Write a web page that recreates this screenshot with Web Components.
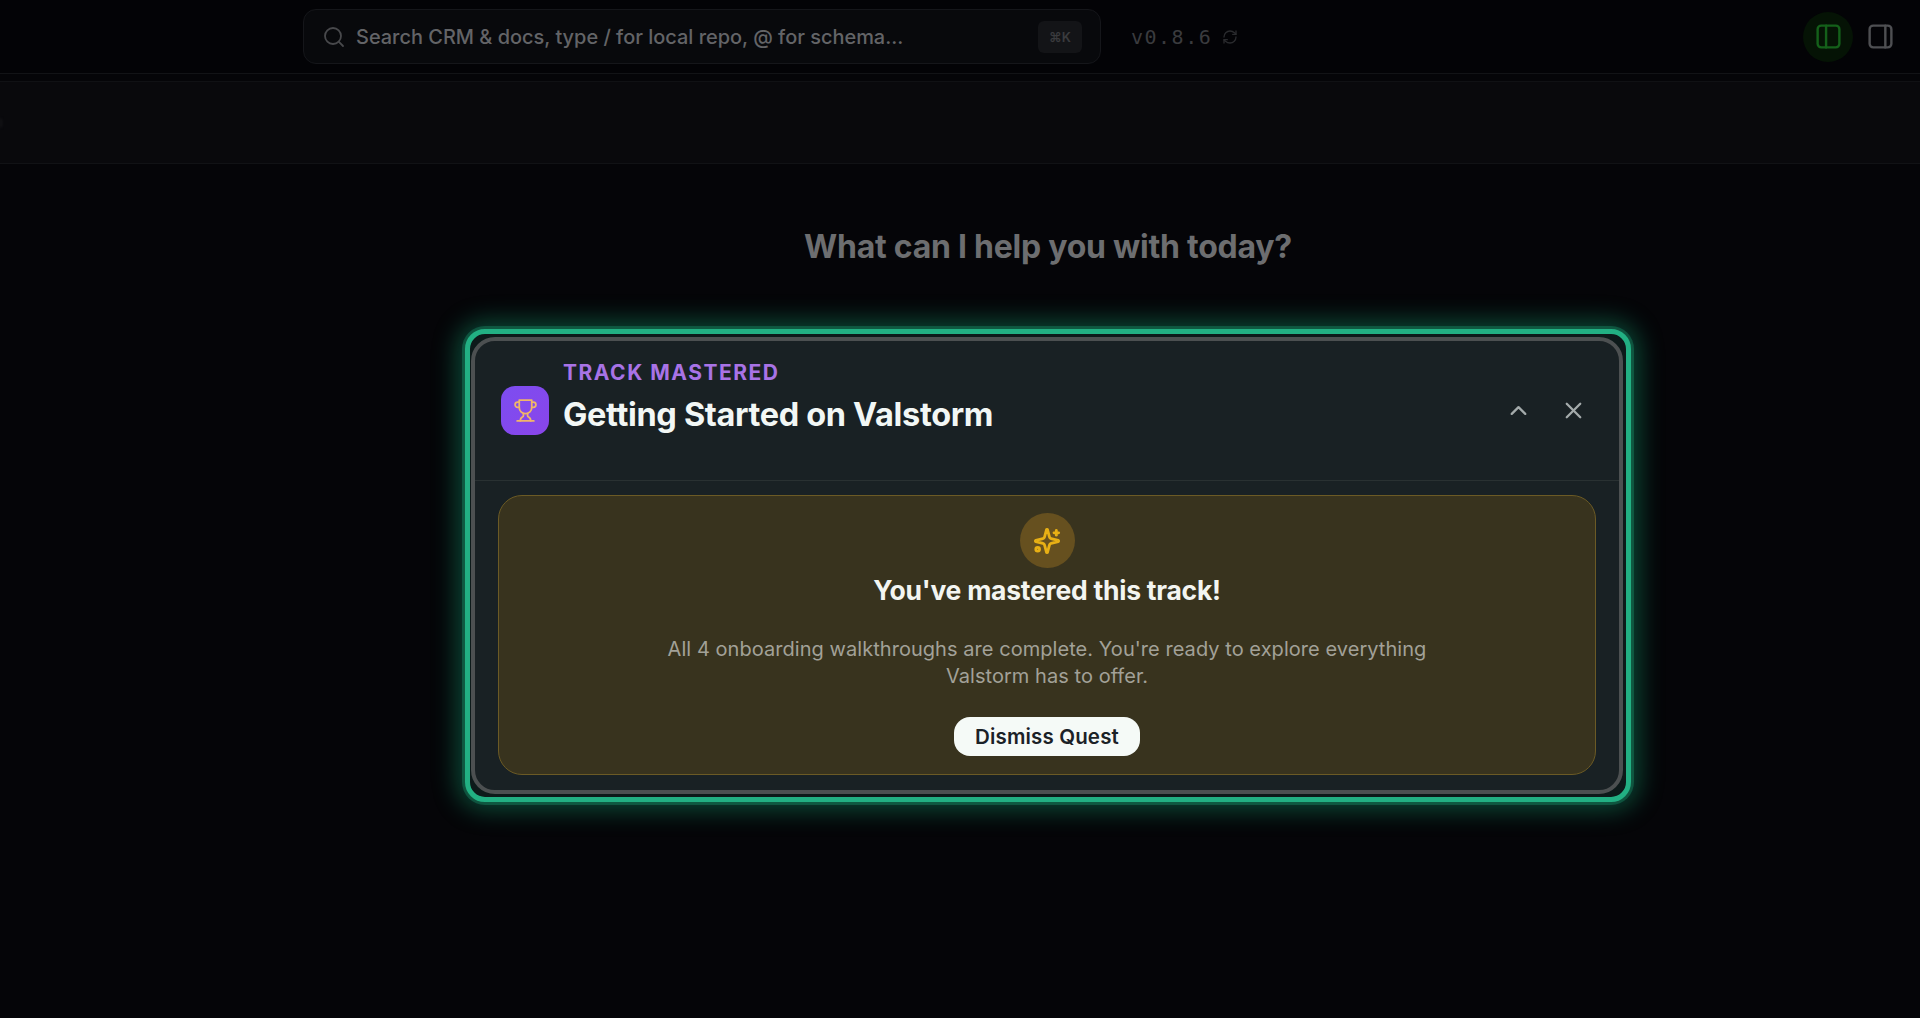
<!doctype html>
<html><head><meta charset="utf-8"><title>Valstorm</title>
<style>
html,body{margin:0;height:100%;background:#050508;overflow:hidden}
body{font-family:Inter,"Liberation Sans",sans-serif}
</style></head><body>
<app-shell>
  <top-bar></top-bar>
  <sub-bar></sub-bar>
  <help-view>
    <quest-card></quest-card>
  </help-view>
</app-shell>
<script>
const I=(d,s=24,c='currentColor',w=2)=>`<svg width="${s}" height="${s}" viewBox="0 0 24 24" fill="none" stroke="${c}" stroke-width="${w}" stroke-linecap="round" stroke-linejoin="round">${d}</svg>`;
const P={
 search:'<path d="m21 21-4.3-4.3"/><circle cx="11" cy="11" r="8"/>',
 refresh:'<path d="M3 12a9 9 0 0 1 9-9 9.75 9.75 0 0 1 6.74 2.74L21 8"/><path d="M21 3v5h-5"/><path d="M21 12a9 9 0 0 1-9 9 9.75 9.75 0 0 1-6.74-2.74L3 16"/><path d="M8 16H3v5"/>',
 pl:'<rect width="18" height="18" x="3" y="3" rx="3"/><path d="M10 3v18"/>',
 pr:'<rect width="18" height="18" x="3" y="3" rx="3"/><path d="M16 3v18"/>',
 trophy:'<path d="M6 9H4.5a2.5 2.5 0 0 1 0-5H6"/><path d="M18 9h1.5a2.5 2.5 0 0 0 0-5H18"/><path d="M4 22h16"/><path d="M10 14.66V17c0 .55-.47.98-.97 1.21C7.85 18.75 7 20.24 7 22"/><path d="M14 14.66V17c0 .55.47.98.97 1.21C16.15 18.75 17 20.24 17 22"/><path d="M18 2H6v7a6 6 0 0 0 12 0V2Z"/>',
 sparkles:'<path d="M9.94 15.5A2 2 0 0 0 8.5 14.06l-6.13-1.58a.5.5 0 0 1 0-.96L8.5 9.94A2 2 0 0 0 9.94 8.5l1.58-6.13a.5.5 0 0 1 .96 0L14.06 8.5A2 2 0 0 0 15.5 9.94l6.13 1.58a.5.5 0 0 1 0 .96L15.5 14.06a2 2 0 0 0-1.44 1.44l-1.58 6.13a.5.5 0 0 1-.96 0z"/><path d="M20 3v4"/><path d="M22 5h-4"/><circle cx="4" cy="19" r="1.6"/>',
 up:'<path d="m18 15-6-6-6 6"/>',
 x:'<path d="M18 6 6 18"/><path d="m6 6 12 12"/>'
};
function def(name,html){customElements.define(name,class extends HTMLElement{constructor(){super();this.attachShadow({mode:'open'}).innerHTML=html}})}

def('app-shell',`<style>:host{display:flex;flex-direction:column;height:1018px;background:#050508}</style><slot></slot>`);

def('search-box',`<style>
:host{display:flex;align-items:center;box-sizing:border-box;width:798px;height:55px;padding:0 18px 0 18px;border:1px solid #15161a;border-radius:13px;background:#08090c;color:#636467;font-size:19.95px;font-weight:500;line-height:1}
svg{flex:none;margin-right:10px;color:#48494c}
span{flex:1;white-space:nowrap;padding-top:2px}
kbd{flex:none;display:flex;align-items:center;justify-content:center;width:44px;height:32px;border-radius:6px;background:#131417;color:#3a3b3e;font:600 13px Inter,sans-serif}
</style>${I(P.search,24,'currentColor',1.8)}<span>Search CRM &amp; docs, type / for local repo, @ for schema...</span><kbd>⌘K</kbd>`);

def('top-bar',`<style>
:host{display:flex;align-items:center;box-sizing:border-box;height:74px;padding:0 15px 0 303px;border-bottom:1px solid #121316;background:#030306;flex:none}
.v{display:flex;align-items:center;margin-left:30px;color:#3a3b3e;font:20px "DejaVu Sans Mono","Liberation Mono",monospace;letter-spacing:1.5px}
.v svg{margin-left:10px;color:#2a2b2e}
.r{margin-left:auto;display:flex;align-items:center;gap:2px}
.b{display:flex;width:50px;height:50px;align-items:center;justify-content:center;border-radius:50%}
.on{background:#051305;color:#14601a}
.off{color:#4e4f52}
</style><search-box></search-box><div class="v">v0.8.6${I(P.refresh,16,'currentColor',2)}</div>
<div class="r"><div class="b on">${I(P.pl,29,'currentColor',2)}</div><div class="b off">${I(P.pr,29,'currentColor',2)}</div></div>`);

def('sub-bar',`<style>:host{display:flex;align-items:center;flex:none;box-sizing:border-box;height:83px;margin-top:7px;background:#09090c;border-top:1px solid #101114;border-bottom:1px solid #111215}
i{display:block;width:2px;height:10px;background:#141417;border-radius:0 3px 3px 0;filter:blur(1px)}</style><i></i>`);

def('help-view',`<style>
:host{display:flex;flex-direction:column;align-items:center;flex:1;padding-left:176px}
h1{margin:0;padding-top:65px;font-size:32px;line-height:36px;font-weight:700;color:#6d6e70;letter-spacing:-.25px}
.s{margin-top:64px}
</style><h1>What can I help you with today?</h1><div class="s"><slot></slot></div>`);

def('quest-header',`<style>
:host{display:flex;align-items:center;box-sizing:border-box;height:140px;padding:0 32px 0 26px;border-bottom:1px solid #293132}
.ic{flex:none;width:48px;height:49px;border-radius:14px;background:linear-gradient(135deg,#7c4df0,#8a45ea);display:flex;align-items:center;justify-content:center;color:#f0b56a}
.t{margin-left:14px;margin-top:-24px}
.k{font-size:21px;line-height:24px;font-weight:700;letter-spacing:1.5px;color:#a873e6}
.h{margin-top:8px;font-size:32.5px;line-height:44px;font-weight:700;letter-spacing:-.35px;color:#f2f7f5;white-space:nowrap}
.a{margin-left:auto;display:flex;align-items:center;gap:28px;color:#a4abab}
.a svg{display:block}
</style><div class="ic">${I(P.trophy,25,'currentColor',1.7)}</div>
<div class="t"><div class="k">TRACK MASTERED</div><div class="h">Getting Started on Valstorm</div></div>
<div class="a">${I(P.up,27,'currentColor',2)}${I(P.x,27,'currentColor',2)}</div>`);

def('mastered-panel',`<style>
:host{display:flex;flex-direction:column;align-items:center;box-sizing:border-box;width:1098px;height:280px;margin:14px 0 0 23px;padding-top:17px;border:1px solid #6b5a25;border-radius:24px;background:#38331e;text-align:center}
.o{width:55px;height:55px;border-radius:50%;background:#66501f;display:flex;align-items:center;justify-content:center;color:#e8b015}
h2{margin:4px 0 0;font-size:26.5px;line-height:36px;font-weight:700;letter-spacing:-.25px;color:#f3f5f1}
p{margin:28px 0 0;width:800px;font-size:20px;line-height:27px;color:#a2a198;letter-spacing:.05px}
button{all:unset;margin-top:27px;box-sizing:border-box;width:186px;height:39px;border-radius:16px;background:#f5faf7;color:#1b2227;font:600 20.5px/39px Inter,sans-serif;letter-spacing:.15px;text-align:center}
</style><div class="o">${I(P.sparkles,28,'currentColor',2.4)}</div>
<h2>You've mastered this track!</h2>
<p>All 4 onboarding walkthroughs are complete. You're ready to explore everything Valstorm has to offer.</p>
<button>Dismiss Quest</button>`);

def('quest-card',`<style>
:host{display:block;box-sizing:border-box;width:1166px;height:473px;padding:3px 3px 3px 1px;border:5px solid #22b083;border-radius:20px;background:#0d1a1a;box-shadow:0 0 0 3px rgba(32,173,127,.3),0 0 24px 8px rgba(20,170,120,.42)}
.in{box-sizing:border-box;height:100%;border:4px solid #4c5051;border-radius:24px;background:#192124;overflow:hidden}
</style><div class="in"><quest-header></quest-header><mastered-panel></mastered-panel></div>`);
</script>
</body></html>
